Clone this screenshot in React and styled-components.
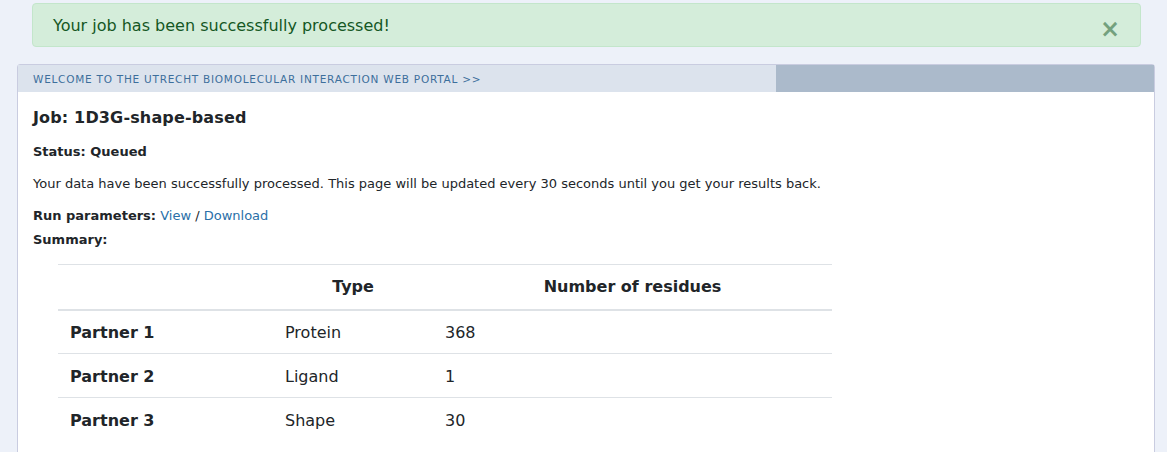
import React from 'react'
import styled, { createGlobalStyle } from 'styled-components'

const Global = createGlobalStyle`
  body {
    margin: 0;
    background: #edf1f9;
    font-family: "DejaVu Sans", Verdana, sans-serif;
    color: #212529;
  }
`

const Page = styled.div`
  padding-top: 3px;
`

const Alert = styled.div`
  margin: 0 26px 0 32px;
  height: 44px;
  box-sizing: border-box;
  padding: 0 20px;
  display: flex;
  align-items: center;
  justify-content: space-between;
  background: #d4edda;
  border: 1px solid #c3e6cb;
  border-radius: 4px;
  color: #155724;
  font-size: 16px;
`

const Close = styled.span`
  font-size: 24px;
  font-weight: bold;
  line-height: 1;
  color: #155724;
  opacity: 0.5;
  margin-top: 7px;
`

const Panel = styled.div`
  margin: 17px 12px 0 17px;
  border: 1px solid #c9cce0;
  border-radius: 3px 3px 0 0;
  background: #fff;
  height: 395px;
`

const Bar = styled.div`
  display: flex;
  height: 27px;
`

const BarTitle = styled.div`
  width: 758px;
  background: #dce3ed;
  display: flex;
  align-items: center;
  padding-left: 15px;
  box-sizing: border-box;
  font-size: 10.5px;
  letter-spacing: 0.75px;
  color: #3d6f9c;
  text-transform: uppercase;
`

const BarFill = styled.div`
  flex: 1;
  background: #abbacb;
`

const Body = styled.div`
  padding: 16px 15px 0;
`

const Title = styled.h1`
  margin: 0;
  font-size: 16px;
  line-height: 20px;
  font-weight: bold;
  letter-spacing: 0.15px;
`

const Line = styled.div`
  margin-top: ${p => p.$gap}px;
  font-size: ${p => p.$size || 13}px;
  line-height: 16px;
  font-weight: ${p => (p.$bold ? 'bold' : 'normal')};
`

const Label = styled.b``

const Link = styled.a`
  color: #2a6fa8;
  text-decoration: none;
`

const Table = styled.table`
  margin: 16px 0 0 25px;
  width: 774px;
  border-collapse: collapse;
  font-size: 16px;
  th, td {
    height: 44px;
    padding: 0 12px;
    box-sizing: border-box;
    border-top: 1px solid #dee2e6;
    text-align: left;
  }
  th {
    height: 45px;
    text-align: center;
    border-bottom: 2px solid #dee2e6;
  }
  td {
    padding-top: 1px;
  }
`

const rows = [
  ['Partner 1', 'Protein', '368'],
  ['Partner 2', 'Ligand', '1'],
  ['Partner 3', 'Shape', '30'],
]

export default function App() {
  return (
    <Page>
      <Global />
      <Alert>
        <span>Your job has been successfully processed!</span>
        <Close>×</Close>
      </Alert>
      <Panel>
        <Bar>
          <BarTitle>Welcome to the Utrecht Biomolecular Interaction Web Portal &gt;&gt;</BarTitle>
          <BarFill />
        </Bar>
        <Body>
          <Title>Job: 1D3G-shape-based</Title>
          <Line $gap={16} $bold>Status: Queued</Line>
          <Line $gap={16} $size={13}>
            Your data have been successfully processed. This page will be updated every 30 seconds until you get your results back.
          </Line>
          <Line $gap={16}>
            <Label>Run parameters:</Label> <Link href="#">View</Link> / <Link href="#">Download</Link>
          </Line>
          <Line $gap={8} $bold>Summary:</Line>
          <Table>
            <colgroup>
              <col style={{ width: 215 }} />
              <col style={{ width: 160 }} />
              <col />
            </colgroup>
            <thead>
              <tr>
                <th></th>
                <th>Type</th>
                <th>Number of residues</th>
              </tr>
            </thead>
            <tbody>
              {rows.map(r => (
                <tr key={r[0]}>
                  <td><b>{r[0]}</b></td>
                  <td>{r[1]}</td>
                  <td>{r[2]}</td>
                </tr>
              ))}
            </tbody>
          </Table>
        </Body>
      </Panel>
    </Page>
  )
}
